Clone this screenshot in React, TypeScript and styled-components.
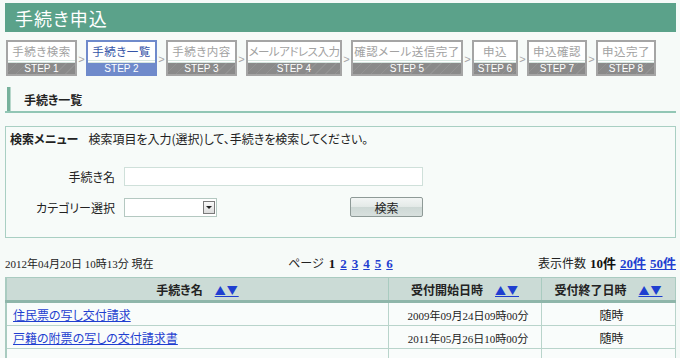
import React from "react";
import styled, { createGlobalStyle } from "styled-components";

const GlobalStyle = createGlobalStyle`
  body {
    margin: 0;
    background: #f6faf8;
    font-family: "Noto Sans CJK JP", "Liberation Sans", sans-serif;
    font-size: 12px;
    font-feature-settings: "palt";
    color: #222;
  }
`;

const Page = styled.div`
  width: 671px;
  padding: 3px 4px 0 5px;
`;

const TitleBar = styled.header`
  height: 29px;
  background: #5ba28a;
  display: flex;
  align-items: center;
  padding-left: 10px;
`;

const Title = styled.h1`
  margin: 0;
  font-size: 18px;
  font-weight: 400;
  color: #fff;
  letter-spacing: 1px;
`;

const Steps = styled.ol`
  list-style: none;
  margin: 8px 0 0 1px;
  padding: 0;
  display: flex;
  align-items: flex-start;
`;

const StepBox = styled.li<{ $w: number; $active?: boolean }>`
  width: ${(p) => p.$w}px;
  height: 36px;
  box-sizing: border-box;
  border: 2px solid ${(p) => (p.$active ? "#6f8acb" : "#a5a5a5")};
  display: flex;
  flex-direction: column;
  background: #fff;
`;

const StepName = styled.div<{ $active?: boolean; $tight?: boolean }>`
  flex: 1;
  display: flex;
  align-items: center;
  justify-content: center;
  font-size: 11.5px;
  letter-spacing: ${(p) => (p.$tight ? "-0.5px" : "0.5px")};
  color: ${(p) => (p.$active ? "#3554a8" : "#a2a2a2")};
  border-bottom: 3px double #d6e6e0;
  white-space: nowrap;
  overflow: hidden;
  padding-bottom: 1px;
`;

const StepNo = styled.div<{ $active?: boolean }>`
  height: 11px;
  line-height: 11px;
  text-align: center;
  font-family: "Liberation Sans", sans-serif;
  font-size: 10px;
  color: #fff;
  background: ${(p) =>
    p.$active
      ? "#6f8acb"
      : "repeating-linear-gradient(135deg, #8a8a8a 0 6px, #939393 6px 7px)"};
`;

const Arrow = styled.span`
  width: 9px;
  margin-top: 13px;
  text-align: center;
  color: #a5a5a5;
  font-family: "Liberation Sans", sans-serif;
  font-size: 11px;
`;

const SectionHead = styled.h2`
  margin: 11px 0 0;
  height: 24px;
  display: flex;
  align-items: center;
  border-bottom: 2px solid #92c6b5;
  font-size: 12px;
  font-weight: 700;
  &::before {
    content: "";
    width: 3px;
    height: 24px;
    margin: 0 13px 0 2px;
    background: #77b19c;
    border-right: 1px solid #b7d7cb;
  }
`;

const SearchPanel = styled.section`
  margin-top: 13px;
  height: 112px;
  box-sizing: border-box;
  border: 1px solid #a9cfc3;
  background: #f7fbf9;
  padding: 4px 4px 0;
`;

const PanelIntro = styled.p`
  margin: 0;
  display: flex;
  gap: 10px;
  line-height: 16px;
`;

const Strong = styled.b`
  font-weight: 700;
`;

const FormGrid = styled.div`
  margin-top: 20px;
  display: grid;
  grid-template-columns: 105px 217px 300px;
  column-gap: 9px;
  row-gap: 11px;
  align-items: center;
`;

const Label = styled.label`
  text-align: right;
`;

const TextInput = styled.input`
  grid-column: span 2;
  width: 299px;
  height: 19px;
  box-sizing: border-box;
  border: 1px solid #cfe0da;
  background: #fff;
`;

const SelectBox = styled.div`
  width: 93px;
  height: 19px;
  box-sizing: border-box;
  border: 1px solid #b4c8c1;
  background: #fff;
  display: flex;
  justify-content: flex-end;
  align-items: center;
  padding-right: 1px;
`;

const SelectButton = styled.span`
  width: 12px;
  height: 13px;
  box-sizing: border-box;
  border: 1px solid #7a7a7a;
  background: linear-gradient(#fafafa, #dcdcdc);
  display: flex;
  align-items: center;
  justify-content: center;
  &::after {
    content: "";
    border-left: 3px solid transparent;
    border-right: 3px solid transparent;
    border-top: 3px solid #222;
  }
`;

const SearchButton = styled.button`
  width: 73px;
  height: 20px;
  border: 1px solid #8e9a97;
  border-radius: 2px;
  background: linear-gradient(#f2f5f4 0%, #e3e9e7 50%, #cdd8d5 51%, #d8e0de 100%);
  font-family: "Noto Sans CJK JP", sans-serif;
  font-size: 12px;
  color: #222;
  padding: 0;
`;

const InfoRow = styled.div`
  margin-top: 15px;
  display: grid;
  grid-template-columns: 1fr auto 1fr;
  align-items: center;
  height: 18px;
`;

const Serif = styled.span`
  font-family: "Liberation Serif", "Noto Sans CJK JP", serif;
  font-size: 11px;
`;

const Pager = styled.div`
  display: flex;
  gap: 5px;
  align-items: baseline;
`;

const PageNo = styled.a<{ $current?: boolean }>`
  font-family: "Liberation Serif", "Noto Sans CJK JP", serif;
  font-weight: 700;
  font-size: 13px;
  color: ${(p) => (p.$current ? "#111" : "#1f3fd0")};
  text-decoration: ${(p) => (p.$current ? "none" : "underline")};
`;

const PerPage = styled.div`
  justify-self: end;
  display: flex;
  gap: 4px;
  align-items: baseline;
`;

const Table = styled.table`
  margin-top: 6px;
  width: 671px;
  border-collapse: collapse;
  border-left: 2px solid #a9cbc0;
`;

const Th = styled.th<{ $w?: number }>`
  width: ${(p) => (p.$w ? `${p.$w}px` : "auto")};
  height: 22px;
  background: #cbdbd6;
  border: 1px solid #a9cbc0;
  border-bottom: 3px solid #8fb6aa;
  font-weight: 700;
  font-size: 12px;
  padding: 0;
`;

const Sort = styled.a`
  margin-left: 12px;
  color: #1f3fd0;
  font-size: 11px;
  text-decoration: underline;
  letter-spacing: 1px;
`;

const Td = styled.td<{ $align?: string }>`
  height: 22px;
  background: #f9fcfb;
  border: 1px solid #b9d4cb;
  text-align: ${(p) => p.$align || "left"};
  padding: 0 0 0 6px;
`;

const DocLink = styled.a`
  color: #1f3fd0;
  text-decoration: underline;
`;

const steps = [
  { name: "手続き検索", w: 71 },
  { name: "手続き一覧", w: 71, active: true },
  { name: "手続き内容", w: 71 },
  { name: "メールアドレス入力", w: 96, tight: true },
  { name: "確認メール送信完了", w: 112 },
  { name: "申込", w: 46 },
  { name: "申込確認", w: 60 },
  { name: "申込完了", w: 60 },
];

const rows = [
  { name: "住民票の写し交付請求", start: "2009年09月24日09時00分", end: "随時" },
  { name: "戸籍の附票の写しの交付請求書", start: "2011年05月26日10時00分", end: "随時" },
];

export default function App() {
  return (
    <>
      <GlobalStyle />
      <Page>
        <TitleBar>
          <Title>手続き申込</Title>
        </TitleBar>

        <Steps>
          {steps.map((s, i) => (
            <React.Fragment key={s.name}>
              {i > 0 && <Arrow>&gt;</Arrow>}
              <StepBox $w={s.w} $active={s.active}>
                <StepName $active={s.active} $tight={s.tight}>
                  {s.name}
                </StepName>
                <StepNo $active={s.active}>STEP {i + 1}</StepNo>
              </StepBox>
            </React.Fragment>
          ))}
        </Steps>

        <SectionHead>手続き一覧</SectionHead>

        <SearchPanel>
          <PanelIntro>
            <Strong>検索メニュー</Strong>
            <span>検索項目を入力(選択)して、手続きを検索してください。</span>
          </PanelIntro>
          <FormGrid>
            <Label>手続き名</Label>
            <TextInput />
            <Label>カテゴリー選択</Label>
            <SelectBox>
              <SelectButton />
            </SelectBox>
            <SearchButton>検索</SearchButton>
          </FormGrid>
        </SearchPanel>

        <InfoRow>
          <Serif>2012年04月20日 10時13分 現在</Serif>
          <Pager>
            <span>ページ</span>
            <PageNo $current>1</PageNo>
            {[2, 3, 4, 5, 6].map((n) => (
              <PageNo key={n} href="#">
                {n}
              </PageNo>
            ))}
          </Pager>
          <PerPage>
            <span>表示件数</span>
            <PageNo $current>10件</PageNo>
            <PageNo href="#">20件</PageNo>
            <PageNo href="#">50件</PageNo>
          </PerPage>
        </InfoRow>

        <Table>
          <thead>
            <tr>
              <Th>
                手続き名<Sort href="#">▲▼</Sort>
              </Th>
              <Th $w={152}>
                受付開始日時<Sort href="#">▲▼</Sort>
              </Th>
              <Th $w={133}>
                受付終了日時<Sort href="#">▲▼</Sort>
              </Th>
            </tr>
          </thead>
          <tbody>
            {rows.map((r) => (
              <tr key={r.name}>
                <Td>
                  <DocLink href="#">{r.name}</DocLink>
                </Td>
                <Td $align="center">
                  <Serif>{r.start}</Serif>
                </Td>
                <Td $align="center">{r.end}</Td>
              </tr>
            ))}
            <tr>
              <Td />
              <Td />
              <Td />
            </tr>
          </tbody>
        </Table>
      </Page>
    </>
  );
}
